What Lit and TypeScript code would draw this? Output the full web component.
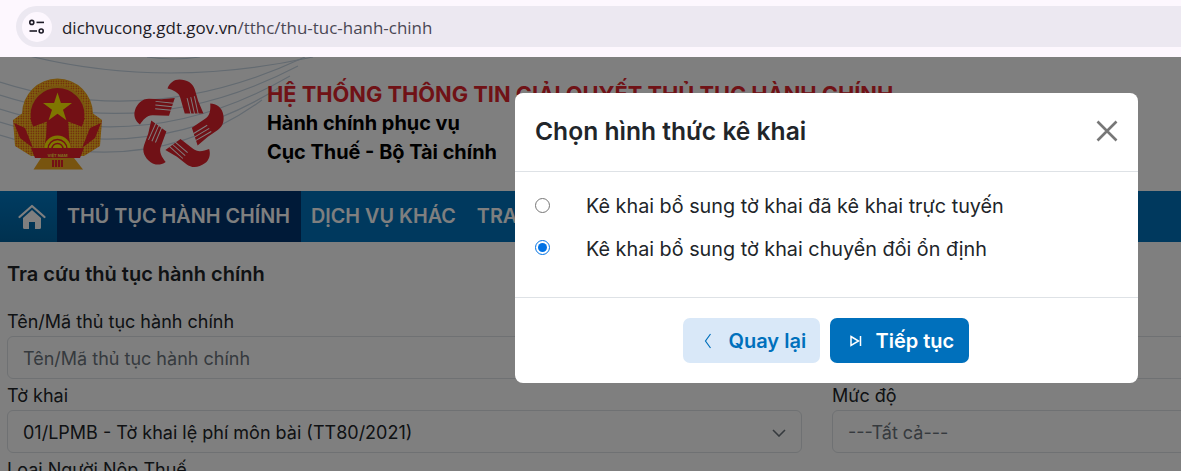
import {LitElement, html, css, svg} from 'lit';
import {customElement} from 'lit/decorators.js';

const handPath = svg`
  <path d="M166 87 C168 81 173 77.500 178.500 77.500 C186 77.500 192.500 81 194.500 88 L198 100 L203.500 113 L184 113 L179.500 97 C178 91 172 88.500 166 87 Z" />
  <g stroke="#fff" stroke-width="1">
    <path d="M186.500 97 L190.400 113.500" /><path d="M190.300 96 L194.200 113.500" /><path d="M194 95 L198 113.500" />
  </g>`;

// fan of thin arcs behind the logos: [left y, control y, end x, end y]
const arcs = [
  [48, 93, 313, 57], [82, 130, 305, 57], [95, 143, 298, 66], [109, 157, 290, 76],
  [122, 169, 280, 87], [135, 182, 262, 100],
];

@customElement('app-root')
export class AppRoot extends LitElement {
  static styles = css`
    :host {
      display: block;
      width: 1181px;
      height: 471px;
      overflow: hidden;
      font-family: Inter, "Noto Sans", sans-serif;
      color: #212529;
      background: #fff;
    }
    .chrome {
      height: 57px;
      box-sizing: border-box;
      padding: 6px 0 10px 16px;
      background: #fdf7fe;
    }
    .url {
      height: 41px;
      display: flex;
      align-items: center;
      gap: 10px;
      padding-left: 6px;
      border-radius: 21px 0 0 21px;
      background: #ece8f1;
      font: 16.95px "Open Sans", sans-serif;
      color: #4a4754;
    }
    .url b { font-weight: 400; color: #1d1b26; }
    .addr { padding-top: 2px; }
    .site {
      width: 30px;
      height: 30px;
      display: flex;
      align-items: center;
      justify-content: center;
      border-radius: 50%;
      background: #fdf7fe;
    }
    .page {
      position: relative;
      height: 414px;
      overflow: hidden;
    }
    .banner {
      position: relative;
      height: 134px;
      display: flex;
      align-items: center;
      padding-left: 267px;
      overflow: hidden;
    }
    .art { position: absolute; left: 0; top: 0; }
    .art text { font: 700 4px Inter, sans-serif; }
    .titles { position: relative; padding-bottom: 2px; font-weight: 700; font-size: 19.9px; line-height: 29px; color: #000; }
    .titles h1 { margin: 0; font-size: 21.8px; line-height: 30px; font-weight: 700; color: #e0252d; white-space: nowrap; }
    nav {
      height: 51px;
      display: flex;
      background: #0072bc;
      color: #fff;
      font-size: 19.8px;
      font-weight: 600;
      line-height: 51px;
      white-space: nowrap;
    }
    .home {
      width: 57px;
      box-sizing: border-box;
      padding-left: 7px;
      display: flex;
      align-items: center;
      justify-content: center;
      background: linear-gradient(#0079c4, #00629f);
    }
    nav a { padding: 0 10px; }
    nav a.on { padding-right: 11px; background: #003470; }
    nav a.on + a { padding-right: 11px; }
    form { width: 1200px; box-sizing: border-box; padding: 18px 0 0 7px; font-size: 18px; }
    form h2 { margin: 0 0 24px; font-size: 20px; line-height: 28px; font-weight: 600; }
    .label { line-height: 19px; height: 24px; }
    .field {
      height: 43px;
      box-sizing: border-box;
      display: flex;
      align-items: center;
      justify-content: space-between;
      padding: 2px 15px 0;
      border: 1px solid #dee2e6;
      border-radius: 6px;
      margin-bottom: 7px;
    }
    .muted { color: #6c757d; }
    .cols { display: grid; grid-template-columns: 795px 1fr; column-gap: 30px; }
    .overlay { position: absolute; inset: 0; background: rgba(0, 0, 0, 0.5); }
    .modal {
      position: absolute;
      left: 515px;
      top: 36px;
      width: 623px;
      height: 290px;
      box-sizing: border-box;
      display: flex;
      flex-direction: column;
      border-radius: 8px;
      background: #fff;
    }
    .head {
      height: 79px;
      flex: none;
      box-sizing: border-box;
      display: flex;
      align-items: center;
      justify-content: space-between;
      padding: 0 20px 2px;
      border-bottom: 1px solid #dee2e6;
    }
    .head h3 { margin: 0; font-size: 24.6px; font-weight: 600; }
    .body { flex: 1; padding: 13px 20px 0; }
    .opt { height: 42.5px; display: flex; align-items: center; font-size: 19.8px; }
    .opt input { width: 15px; height: 15px; margin: 0 36px 2px 0; accent-color: #0072e5; flex: none; }
    .foot {
      height: 86px;
      flex: none;
      box-sizing: border-box;
      display: flex;
      justify-content: center;
      gap: 10px;
      padding: 20px 2px 0 0;
      border-top: 1px solid #dee2e6;
    }
    .btn {
      height: 45px;
      box-sizing: border-box;
      display: flex;
      align-items: center;
      border: 0;
      border-radius: 7px;
      font: 600 20px Inter, sans-serif;
      white-space: nowrap;
    }
    .back { width: 137px; gap: 17px; padding-left: 21px; background: #d9e8f8; color: #0070bc; }
    .next { width: 139px; gap: 14px; padding-left: 20px; background: #0070bc; color: #fff; }
  `;

  render() {
    return html`
      <div class="chrome">
        <div class="url">
          <span class="site">
            <svg width="18" height="18" viewBox="0 0 18 18" fill="none" stroke="#1d1b26" stroke-width="1.6">
              <circle cx="3.800" cy="4.400" r="2" /><path d="M8.500 4.400H16" />
              <circle cx="13.200" cy="13" r="2" /><path d="M1.500 13H9" />
            </svg>
          </span>
          <span class="addr"><b>dichvucong.gdt.gov.vn</b>/tthc/thu-tuc-hanh-chinh</span>
        </div>
      </div>
      <div class="page">
        <div class="banner">
          <svg class="art" width="340" height="134" viewBox="0 57 340 134" fill="none">
            <defs>
              <pattern id="speck" width="2.500" height="2.500" patternUnits="userSpaceOnUse">
                <rect width="2.500" height="2.500" fill="#ffc81e" />
                <circle cx="1.200" cy="1.200" r="0.700" fill="#d8281e" />
              </pattern>
            </defs>
            <g stroke="#c8d6e3" stroke-width="1.200">
              <path d="M147 57 Q173 61 200 57" />
              ${arcs.map(([y0, cy, ex, ey]) => svg`<path d="M0 ${y0} Q150 ${cy} ${ex} ${ey}" />`)}
            </g>
            <g>
              <circle cx="57.500" cy="114" r="35.500" fill="#f0a81e" />
              <path d="M13 120 L24 112 L91 112 L102 120 L100 146 L84 156 L31 156 L15 146 Z" fill="url(#speck)" />
              <path d="M41 158 H74 L83 169.500 H33.500 Z" fill="#f0a81e" />
              <circle cx="57.500" cy="114" r="31.500" stroke="url(#speck)" stroke-width="6" />
              <circle cx="57.500" cy="115" r="27" fill="#e6202a" />
              <path d="M30 118 H85 L71 148 H44 Z" fill="#e6202a" />
              <path d="M57.500 92.500 L60.900 103.100 H72 L63 109.700 L66.400 120.300 L57.500 113.700 L48.600 120.300 L52 109.700 L43 103.100 H54.100 Z" fill="#ffec00" />
              <path d="M47 121.500 L27 129 L33 148 L44 148 L46 137 Z M68 121.500 L88 129 L82 148 L71 148 L69 137 Z" fill="url(#speck)" />
              <path d="M44 149 A13.500 13.500 0 0 1 71 149 Z" fill="#ffec00" />
              <path d="M48 149 A9.500 9.500 0 0 1 67 149 M52 149 A5.500 5.500 0 0 1 63 149" stroke="#e6202a" stroke-width="1.400" />
              <path d="M14 123 L25 128 L33 148 L20 138 Z M101 123 L90 128 L82 148 L95 138 Z" fill="#e6202a" />
              <path d="M31 148 H84 L80 158 H35 Z" fill="#e6202a" />
              <text x="57.500" y="157" text-anchor="middle" fill="#ffe040">VIỆT NAM</text>
              <path d="M52 160 H63 V167 H52 Z" fill="#e6202a" />
              <path d="M54.500 160 V167 M57.500 160 V167 M60.500 160 V167" stroke="#f0a81e" stroke-width="0.900" />
            </g>
            <g fill="#e0222c" transform="translate(178.500 125.500) scale(0.96) translate(-177.500 -125.500)">
              ${[0, 72, 144, 216, 288].map((a) => svg`<g transform="rotate(${a} 177.500 125.500)">${handPath}</g>`)}
            </g>
          </svg>
          <div class="titles">
            <h1>HỆ THỐNG THÔNG TIN GIẢI QUYẾT THỦ TỤC HÀNH CHÍNH</h1>
            <div>Hành chính phục vụ</div>
            <div>Cục Thuế - Bộ Tài chính</div>
          </div>
        </div>
        <nav>
          <span class="home">
            <svg width="28" height="26" viewBox="0 0 28 26" fill="none">
              <path d="M1.500 13 14 2l12.500 11" stroke="#fff" stroke-width="2.200" stroke-linecap="round" stroke-linejoin="round" />
              <path d="M5 14 14 6l9 8v9.500a1.500 1.500 0 0 1-1.500 1.500H17v-7h-6v7H6.500A1.500 1.500 0 0 1 5 23.500Z" fill="#fff" />
            </svg>
          </span>
          <a class="on">THỦ TỤC HÀNH CHÍNH</a>
          <a>DỊCH VỤ KHÁC</a>
          <a>TRA CỨU</a>
        </nav>
        <form>
          <h2>Tra cứu thủ tục hành chính</h2>
          <div class="label">Tên/Mã thủ tục hành chính</div>
          <div class="field muted">Tên/Mã thủ tục hành chính</div>
          <div class="cols">
            <div>
              <div class="label">Tờ khai</div>
              <div class="field">
                01/LPMB - Tờ khai lệ phí môn bài (TT80/2021)
                <svg width="14" height="8" viewBox="0 0 14 8" fill="none" stroke="#6c757d" stroke-width="1.600"><path d="M1 1l6 6 6-6" /></svg>
              </div>
            </div>
            <div>
              <div class="label">Mức độ</div>
              <div class="field muted">---Tất cả---</div>
            </div>
          </div>
          <div class="label">Loại Người Nộp Thuế</div>
        </form>
        <div class="overlay"></div>
        <div class="modal">
          <div class="head">
            <h3>Chọn hình thức kê khai</h3>
            <svg width="22" height="22" viewBox="0 0 22 22" stroke="#777" stroke-width="2.600"><path d="M1.500 1.500l19 19M20.500 1.500l-19 19" /></svg>
          </div>
          <div class="body">
            <label class="opt"><input type="radio" name="kind" />Kê khai bổ sung tờ khai đã kê khai trực tuyến</label>
            <label class="opt"><input type="radio" name="kind" checked />Kê khai bổ sung tờ khai chuyển đổi ổn định</label>
          </div>
          <div class="foot">
            <button class="btn back">
              <svg width="8" height="16" viewBox="0 0 8 16" fill="none" stroke="#0070bc" stroke-width="1.200"><path d="M6.500 1 1.500 8l5 7" /></svg>
              Quay lại
            </button>
            <button class="btn next">
              <svg width="12" height="12" viewBox="0 0 12 12" fill="none" stroke="#fff" stroke-width="1.500"><path d="M1 1.500 8.500 6 1 10.500Z" /><path d="M10.500 1v10" /></svg>
              Tiếp tục
            </button>
          </div>
        </div>
      </div>
    `;
  }
}
